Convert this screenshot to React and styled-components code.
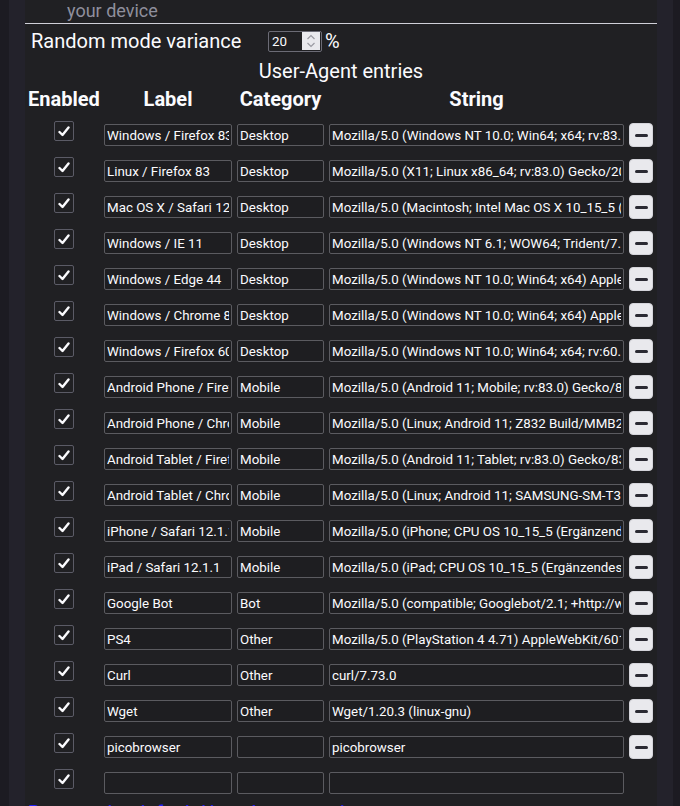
import React from 'react';
import styled, { createGlobalStyle } from 'styled-components';

const GlobalStyle = createGlobalStyle`
  html, body {
    margin: 0;
    padding: 0;
    background: #1c1b22;
    height: 806px;
    overflow: hidden;
  }
  body {
    font-family: Roboto, "Liberation Sans", sans-serif;
    color: #fbfbfe;
  }
`;

const Page = styled.div`
  display: flex;
  padding: 0 7px 0 9px;
  height: 806px;
  overflow: hidden;
`;

const Gutter = styled.div`
  background: #23222b;
  padding: 0 16px;
  height: 100%;
`;

const Panel = styled.div`
  width: 632px;
  min-height: 100%;
  background: #202023;
  display: flex;
  flex-direction: column;

  & > * {
    flex-shrink: 0;
  }
`;

const Tail = styled.div`
  padding-left: 42px;
  font-size: 18px;
  line-height: 22px;
  height: 23px;
  color: #8f8f9d;
`;

const Rule = styled.div`
  height: 1px;
  background: #cfcfd8;
`;

const VarianceRow = styled.div`
  height: 34px;
  display: flex;
  align-items: center;
  padding-left: 6px;
  font-size: 20px;
`;

const VarianceLabel = styled.span`
  width: 237px;
`;

const NumberBox = styled.div`
  width: 48px;
  height: 19px;
  border: 1px solid #6b6b75;
  border-radius: 2px;
  display: flex;
  align-items: center;
  justify-content: space-between;
  padding: 0 1px 0 3px;
  font-size: 13.333px;
  margin-right: 3px;
`;

const Spinner = styled.span`
  width: 18px;
  height: 18px;
  background: #e9e9ed;
  display: flex;
  align-items: center;
  justify-content: center;
`;

const Title = styled.div`
  text-align: center;
  font-size: 20px;
  line-height: 24px;
  margin-top: 1px;
`;

const Table = styled.div`
  margin-top: 4px;
  padding-left: 3px;
  display: grid;
  grid-template-columns: 71px 128px 87px 295px 24px;
  column-gap: 5px;
  row-gap: 12px;
  grid-auto-rows: 24px;
  align-items: center;
`;

const Head = styled.div`
  font-weight: 700;
  font-size: 20px;
  line-height: 24px;
  text-align: center;
  white-space: nowrap;
`;

const CheckCell = styled.div`
  display: flex;
  justify-content: center;
  margin-bottom: 8px;
`;

const CheckBox = styled.span`
  width: 18px;
  height: 18px;
  border: 1px solid #5b5b66;
  border-radius: 2px;
  display: flex;
  align-items: center;
  justify-content: center;
`;

const Field = styled.input`
  box-sizing: border-box;
  width: 100%;
  height: 22px;
  margin: 0;
  padding: 0 2px;
  background: #1e1e21;
  border: 1px solid #5b5b60;
  border-radius: 2px;
  color: #fbfbfe;
  font-family: Roboto, "Liberation Sans", sans-serif;
  font-size: 13.333px;
  outline: none;
`;

const RemoveButton = styled.button`
  box-sizing: border-box;
  width: 24px;
  height: 24px;
  padding: 0;
  background: #e9e9ed;
  border: 1px solid #d4d4da;
  border-radius: 4px;
  display: flex;
  align-items: center;
  justify-content: center;

  &::after {
    content: '';
    width: 13px;
    height: 3px;
    border-radius: 1.5px;
    background: #2b2a33;
  }
`;

const Link = styled.a`
  margin-top: 6px;
  padding-left: 3px;
  font-size: 20px;
  line-height: 24px;
  color: #2222ff;
  text-decoration: underline;
`;

const entries = [
  ['Windows / Firefox 83', 'Desktop', 'Mozilla/5.0 (Windows NT 10.0; Win64; x64; rv:83.0) Gecko/20100101 Firefox/83.0'],
  ['Linux / Firefox 83', 'Desktop', 'Mozilla/5.0 (X11; Linux x86_64; rv:83.0) Gecko/20100101 Firefox/83.0'],
  ['Mac OS X / Safari 12.1.1', 'Desktop', 'Mozilla/5.0 (Macintosh; Intel Mac OS X 10_15_5 (Ergänzendes Update)) AppleWebKit/605.1.15'],
  ['Windows / IE 11', 'Desktop', 'Mozilla/5.0 (Windows NT 6.1; WOW64; Trident/7.0; rv:11.0) like Gecko'],
  ['Windows / Edge 44', 'Desktop', 'Mozilla/5.0 (Windows NT 10.0; Win64; x64) AppleWebKit/537.36 (KHTML, like Gecko) Edge/44'],
  ['Windows / Chrome 87', 'Desktop', 'Mozilla/5.0 (Windows NT 10.0; Win64; x64) AppleWebKit/537.36 (KHTML, like Gecko) Chrome/87'],
  ['Windows / Firefox 60 ESR', 'Desktop', 'Mozilla/5.0 (Windows NT 10.0; Win64; x64; rv:60.0) Gecko/20100101 Firefox/60.0'],
  ['Android Phone / Firefox 83', 'Mobile', 'Mozilla/5.0 (Android 11; Mobile; rv:83.0) Gecko/83.0 Firefox/83.0'],
  ['Android Phone / Chrome 87', 'Mobile', 'Mozilla/5.0 (Linux; Android 11; Z832 Build/MMB29M) AppleWebKit/537.36'],
  ['Android Tablet / Firefox 83', 'Mobile', 'Mozilla/5.0 (Android 11; Tablet; rv:83.0) Gecko/83.0 Firefox/83.0'],
  ['Android Tablet / Chrome 87', 'Mobile', 'Mozilla/5.0 (Linux; Android 11; SAMSUNG-SM-T377A Build/NMF26X) AppleWebKit/537.36'],
  ['iPhone / Safari 12.1.1', 'Mobile', 'Mozilla/5.0 (iPhone; CPU OS 10_15_5 (Ergänzendes Update) like Mac OS X)'],
  ['iPad / Safari 12.1.1', 'Mobile', 'Mozilla/5.0 (iPad; CPU OS 10_15_5 (Ergänzendes Update) like Mac OS X)'],
  ['Google Bot', 'Bot', 'Mozilla/5.0 (compatible; Googlebot/2.1; +http://www.google.com/bot.html)'],
  ['PS4', 'Other', 'Mozilla/5.0 (PlayStation 4 4.71) AppleWebKit/601.2 (KHTML, like Gecko)'],
  ['Curl', 'Other', 'curl/7.73.0'],
  ['Wget', 'Other', 'Wget/1.20.3 (linux-gnu)'],
  ['picobrowser', '', 'picobrowser'],
];

function Check() {
  return (
    <CheckBox>
      <svg width="12" height="11" viewBox="0 0 12 11">
        <path d="M1.5 6 L4.5 9 L10.5 1.5" fill="none" stroke="#fbfbfe" strokeWidth="2.4" strokeLinecap="round" strokeLinejoin="round" />
      </svg>
    </CheckBox>
  );
}

function Chevrons() {
  return (
    <svg width="10" height="16" viewBox="0 0 10 16">
      <path d="M1.5 6 L5 2.5 L8.5 6 M1.5 10 L5 13.5 L8.5 10" fill="none" stroke="#9a9aa2" strokeWidth="1.2" />
    </svg>
  );
}

function EntryRow({ label, category, value, removable }) {
  return (
    <>
      <CheckCell><Check /></CheckCell>
      <Field defaultValue={label} />
      <Field defaultValue={category} />
      <Field defaultValue={value} />
      {removable ? <RemoveButton aria-label="Remove" /> : <span />}
    </>
  );
}

export default function App() {
  return (
    <>
      <GlobalStyle />
      <Page>
        <Gutter>
          <Panel>
            <Tail>your device</Tail>
            <Rule />
            <VarianceRow>
              <VarianceLabel>Random mode variance</VarianceLabel>
              <NumberBox>
                20
                <Spinner><Chevrons /></Spinner>
              </NumberBox>
              %
            </VarianceRow>
            <Title>User-Agent entries</Title>
            <Table>
              <Head>Enabled</Head>
              <Head>Label</Head>
              <Head>Category</Head>
              <Head>String</Head>
              <span />
              {entries.map(([label, category, value]) => (
                <EntryRow key={label} label={label} category={category} value={value} removable />
              ))}
              <EntryRow label="" category="" value="" removable={false} />
            </Table>
            <Link href="#">Restore the default User-Agent entries</Link>
          </Panel>
        </Gutter>
      </Page>
    </>
  );
}
